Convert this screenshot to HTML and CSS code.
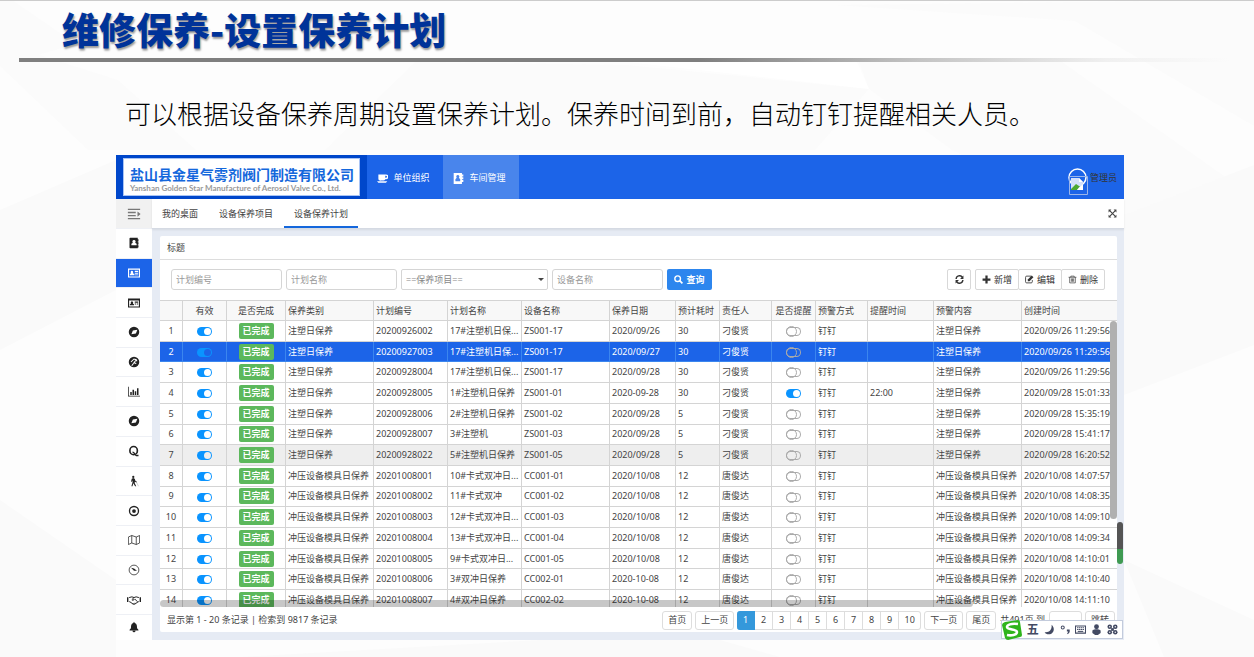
FILE: index.html
```html
<!DOCTYPE html>
<html lang="zh-CN">
<head>
  <meta charset="UTF-8" />
  <meta name="viewport" content="width=device-width, initial-scale=1.0"/>
  <title>维修保养-设置保养计划</title>
  <link rel="stylesheet" href="styles.css">
</head>
<body>
  <svg class="backdrop" viewBox="0 0 1254 657" preserveAspectRatio="none" aria-hidden="true">
    <path fill="#fbfbfb" d="M0 0h12L76 44 0 66zM0 66l36-12 82 26 78 70H88zM415 62l212 3 242 24-54 61H325zM835 5l240 16 179 105V0zM859 62h203l192 135v100L952 150 869 89z"/>
    <path fill="#fafafa" d="M1124 215l130-50v180l-130 50zM0 210l116-50v130L0 350zM0 500l116 80v77H0zM240 657l300-17h180l60 17zM1124 560l130 60v37h-90z"/>
    <path fill="#fff" d="M627 62h230l12 27z"/>
  </svg>

  <header class="slide-header">
    <h1>维修保养-设置保养计划</h1>
  </header>
  <p class="slide-text">可以根据设备保养周期设置保养计划。保养时间到前，自动钉钉提醒相关人员。</p>

  <div class="app">
    <div class="topbar">
      <div class="brand">
        <div class="brand-box">
          <div class="brand-name">盐山县金星气雾剂阀门制造有限公司</div>
          <div class="brand-en">Yanshan Golden Star Manufacture of Aerosol Valve Co., Ltd.</div>
        </div>
      </div>
      <nav class="topnav">
        <a href="#"><svg viewBox="0 0 16 16"><path d="M2 2h11a3 3 0 0 1 0 7h-1a3 3 0 0 1-3 2H6a3 3 0 0 1-4-3zM12 4v3h1a1.500 1.500 0 0 0 0-3zM0 12h15l-2 2H2z" fill-rule="evenodd"/></svg>单位组织</a>
        <a href="#" class="active"><svg viewBox="0 0 16 16"><path fill-rule="evenodd" d="M1 0h12v2h2v3h-2v1h2v3h-2v1h2v3h-2v3H1zM7 3a2.300 2.300 0 0 0-1.500 4L3.500 9v3h7V9L8.500 7A2.300 2.300 0 0 0 7 3z"/></svg>车间管理</a>
      </nav>
      <div class="user">
        <svg class="avatar" viewBox="0 0 22 28">
          <circle cx="10.500" cy="10.500" r="8.500" fill="none" stroke="#fff" stroke-width="1.500"/>
          <path d="M2.500 9.500h18v18h-18z" fill="none" stroke="#9bb5ea"/>
          <path d="M4 11h8l4 4v8H4z" fill="#d3e0fb"/><path d="M12 11v4h4z" fill="#fff"/>
          <path d="M4 22l5-5 3 2 1 0-3 4H4z" fill="#4ca832"/><path d="M10 23l6-6v6z" fill="#fff"/>
        </svg>
        <span>管理员</span>
      </div>
    </div>

    <div class="main">
      <nav class="sidebar">
        <button class="fold" aria-label="折叠菜单"><svg viewBox="0 0 16 16"><path d="M1 2h14v1.500H1zM1 5.500h9V7H1zM1 9h9v1.500H1zM1 12.500h14V14H1zM12 5l3.500 3L12 11z"/></svg></button>
        <a href="#" aria-label="通讯录"><svg viewBox="0 0 16 16"><path fill-rule="evenodd" d="M3 1h10v2h1v3h-1v1h1v3h-1v1h1v3h-1v1H3a1 1 0 0 1-1-1V2a1 1 0 0 1 1-1zM8 4a2 2 0 0 0-1.500 3.500L4.500 9v2h7V9l-2-1.500A2 2 0 0 0 8 4z"/></svg></a>
        <a href="#" class="active" aria-label="保养"><svg viewBox="0 0 16 16"><path fill-rule="evenodd" d="M0 2h16v12H0zM1.500 3.500v9h13v-9zM5 5a1.800 1.800 0 0 0-1 3l-1.500 1.500V11h6V9.500L6.500 8A1.800 1.800 0 0 0 5 5zM9 5h4.500v1.500H9zM9 7.500h4.500V9H9zM9 10h4.500v1H9z"/></svg></a>
        <a href="#" aria-label="卡片"><svg viewBox="0 0 16 16"><path fill-rule="evenodd" d="M0 2h16v12H0zM1.500 4.500v8h13v-8z"/><path d="M2.500 11V9.500L4 8.500a1.600 1.600 0 1 1 2.500 0L8 9.500V11zM9 6h4.500v1.500H9zM9 8.500h2v1.500H9zM12 8.500h1.500v1.500H12z"/></svg></a>
        <a href="#" aria-label="设备"><svg viewBox="0 0 16 16"><path fill-rule="evenodd" d="M8 1a7 7 0 1 0 0 14A7 7 0 0 0 8 1zM6.500 6l6-1-2 5-6 1z"/></svg></a>
        <a href="#" aria-label="维修"><svg viewBox="0 0 16 16"><circle cx="8" cy="8" r="7"/><path d="M5 13l3-4M4 8l4-4 3 1-3 4 3 1M10 4l2 3" fill="none" stroke="#fff" stroke-width="1.400"/></svg></a>
        <a href="#" aria-label="统计"><svg viewBox="0 0 16 16"><path d="M0 1h1v12h15v1H0zM3 8h2v4H3zM6 5h2v7H6zM9 7h2v5H9zM12 3h2v9h-2z"/></svg></a>
        <a href="#" aria-label="巡检"><svg viewBox="0 0 16 16"><path fill-rule="evenodd" d="M8 1a7 7 0 1 0 0 14A7 7 0 0 0 8 1zM6.500 6l6-1-2 5-6 1z"/></svg></a>
        <a href="#" aria-label="质量"><svg viewBox="0 0 16 16"><ellipse cx="7.500" cy="7.500" rx="5" ry="5.500" fill="none" stroke="currentColor" stroke-width="2.200"/><path d="M6 9.500c3 0 3 4 5 4.500h3" fill="none" stroke="currentColor" stroke-width="1.800"/></svg></a>
        <a href="#" aria-label="人员"><svg viewBox="0 0 16 16"><circle cx="7" cy="2.500" r="1.500"/><path d="M5 5l2-1 2 1 1 3 2 1-.5 1L9 9v2l2 4H9.500L7 11l-1 4H4.500L6 10V7L5 9H4z"/><path d="M11 9l3 6" stroke="#999" stroke-width=".6"/></svg></a>
        <a href="#" aria-label="目标"><svg viewBox="0 0 16 16"><circle cx="8" cy="8" r="6" fill="none" stroke="currentColor" stroke-width="1.800"/><circle cx="8" cy="8" r="2.500"/></svg></a>
        <a href="#" aria-label="地图"><svg viewBox="0 0 16 16"><path d="M.5 4L5 2l6 2 4.500-2v10L11 14l-6-2-4.500 2zM5 2v10M11 4v10" fill="none" stroke="currentColor"/></svg></a>
        <a href="#" aria-label="仪表"><svg viewBox="0 0 16 16"><circle cx="8" cy="8" r="6.500" fill="none" stroke="currentColor"/><path d="M4 5l4 1 4 3-4 0z"/></svg></a>
        <a href="#" aria-label="合作"><svg class="wide" viewBox="0 0 20 16"><path d="M0 4h2v7H0zM18 4h2v7h-2z"/><path d="M3 4.500l4-1 3 1 3-1 4 1M3 10.500h1l5 3.500h2l5-3.500h1M10 4.500L7 7.500q1 2 3 0l1-1 4 4M9 14l2-2" fill="none" stroke="currentColor" stroke-width="1.400"/></svg></a>
        <a href="#" aria-label="通知"><svg viewBox="0 0 16 16"><path d="M8 1l1 1.500c3 1 3 4 3 6 0 2 2 2 2 4H2c0-2 2-2 2-4 0-2 0-5 3-6zM6 13h4a2 2 0 0 1-4 0z"/></svg></a>
      </nav>

      <div class="workspace">
        <div class="tabs">
          <a href="#">我的桌面</a>
          <a href="#">设备保养项目</a>
          <a href="#" class="active">设备保养计划</a>
          <button class="fullscreen" aria-label="全屏"><svg viewBox="0 0 16 16"><path d="M1 1h5L1 6zM15 1v5l-5-5zM1 15v-5l5 5zM15 15h-5l5-5z"/><path d="M3 3l10 10M13 3L3 13" stroke="currentColor" stroke-width="2"/></svg></button>
        </div>

        <section class="panel">
          <h2>标题</h2>
          <form class="toolbar">
            <input type="text" placeholder="计划编号" aria-label="计划编号">
            <input type="text" placeholder="计划名称" aria-label="计划名称">
            <span class="select-box">
              <select aria-label="保养项目"><option>==保养项目==</option></select>
            </span>
            <input type="text" placeholder="设备名称" aria-label="设备名称">
            <button type="button" class="search"><svg viewBox="0 0 16 16"><circle cx="6.500" cy="6.500" r="5" fill="none" stroke="currentColor" stroke-width="2.500"/><path d="M10 10l5 5" stroke="currentColor" stroke-width="3"/></svg>查询</button>
            <button type="button" class="tool refresh" aria-label="刷新"><svg viewBox="0 0 16 16"><path d="M2 7a6 6 0 0 1 11-3M14 9a6 6 0 0 1-11 3" fill="none" stroke="currentColor" stroke-width="2.500"/><path d="M15 1v6H9zM1 15V9h6z"/></svg></button>
            <div class="tool-group">
              <button type="button" class="tool"><svg viewBox="0 0 16 16"><path d="M6 1h4v5h5v4h-5v5H6v-5H1V6h5z"/></svg>新增</button>
              <button type="button" class="tool"><svg viewBox="0 0 16 16"><path d="M11 2H3a2 2 0 0 0-2 2v8a2 2 0 0 0 2 2h8a2 2 0 0 0 2-2V9" fill="none" stroke="currentColor" stroke-width="1.500"/><path d="M5 11V8l7-7 3 3-7 7z"/></svg>编辑</button>
              <button type="button" class="tool"><svg viewBox="0 0 16 16"><path d="M1 4h14M5 4V2h6v2M3 4v10h10V4M6 6v6M8 6v6M10 6v6" fill="none" stroke="currentColor" stroke-width="1.200"/></svg>删除</button>
            </div>
          </form>

          <div class="grid">
            <table>
              <colgroup>
                <col class="w23"><col class="w44"><col class="w59"><col class="w88"><col class="w74">
                <col class="w74"><col class="w88"><col class="w66"><col class="w44"><col class="w52">
                <col class="w44"><col class="w52"><col class="w66"><col class="w88"><col>
              </colgroup>
              <thead>
                <tr>
                  <th></th><th class="center">有效</th><th class="center">是否完成</th><th>保养类别</th><th>计划编号</th>
                  <th>计划名称</th><th>设备名称</th><th>保养日期</th><th>预计耗时</th><th>责任人</th>
                  <th class="center">是否提醒</th><th>预警方式</th><th>提醒时间</th><th>预警内容</th><th>创建时间</th>
                </tr>
              </thead>
              <tbody id="planRows"></tbody>
            </table>
            <div class="scroll-y"></div>
            <div class="scroll-x"></div>
          </div>

          <div class="pager">
            <span class="total">显示第 1 - 20 条记录 | 检索到 9817 条记录</span>
            <button>首页</button>
            <button>上一页</button>
            <div class="pages">
              <button class="active">1</button><button>2</button><button>3</button><button>4</button><button>5</button><button>6</button><button>7</button><button>8</button><button>9</button><button>10</button>
            </div>
            <button>下一页</button>
            <button>尾页</button>
            <span class="jump">共491页 到</span>
            <input type="text" aria-label="页码">
            <button>跳转</button>
          </div>
        </section>
      </div>
    </div>

    <div class="level"></div>
    <div class="ime">
      <svg class="ime-logo" viewBox="0 0 20 20"><path d="M3 2l13-2q2 0 2 2l2 13q0 2-2 2L6 20q-2 0-3-2L0 5q0-2 3-3z" fill="#2fb41c"/><path d="M16 4C9 3 5 5 5 7c0 3 10 2 10 5 0 3-6 4-10 3" fill="none" stroke="#fff" stroke-width="2.600"/></svg>
      <span>五</span>
      <svg viewBox="0 0 16 16"><path d="M11 1c6 5 3 14-4 14-3 0-5-1-6-3 7 1 11-4 10-11z"/></svg>
      <svg viewBox="0 0 16 16"><circle cx="4" cy="5" r="2.200" fill="none" stroke="currentColor" stroke-width="1.500"/><path d="M10 8h4c1 4-1 6-4 7l2-4h-2z"/></svg>
      <svg viewBox="0 0 16 16"><path d="M0 2h16v12H0zM1.500 3.500v9h13v-9z" fill-rule="evenodd"/><path d="M3 5.500h10M3 8h10" stroke="currentColor" stroke-width="1.500" stroke-dasharray="2 .7"/><path d="M4 10h8v1.500H4z"/></svg>
      <svg viewBox="0 0 16 16"><circle cx="8" cy="4" r="3.500"/><path d="M2 10c0-3 12-3 12 0v3l-4 3H6l-4-3z"/></svg>
      <svg viewBox="0 0 16 16"><path d="M6 6h4v4H6z"/><circle cx="4" cy="4" r="3.300"/><circle cx="12" cy="4" r="3.300"/><circle cx="4" cy="12" r="3.300"/><circle cx="12" cy="12" r="3.300"/><path d="M4 4h0M12 4h0M4 12h0M12 12h0" stroke="#fff" stroke-width="2" stroke-linecap="round"/></svg>
    </div>
  </div>

  <script src="script.js"></script>
</body>
</html>
```

FILE: styles.css
```css
* {
  box-sizing: border-box;
}

body {
  margin: 0;
  font-family: "Noto Sans", "Noto Sans CJK SC", sans-serif;
  font-size: 9px;
  line-height: 12px;
  color: #444;
  background: #fdfdfd;
}

a {
  color: inherit;
  text-decoration: none;
}

button, input, select {
  font: inherit;
  color: inherit;
  margin: 0;
}

button {
  cursor: pointer;
}

svg {
  fill: currentColor;
  flex: none;
}

.backdrop {
  position: absolute;
  top: 0;
  left: 0;
  width: 100%;
  height: 100%;
  z-index: -1;
}

/* slide heading */
.slide-header {
  border-top: 1px solid #ccc;
  padding: 4px 0 0 19px;
}

.slide-header h1 {
  margin: 0;
  padding: 0 0 5px 43px;
  font-family: "Noto Sans CJK SC", sans-serif;
  font-size: 37px;
  line-height: 48px;
  font-weight: 900;
  color: #039;
  text-shadow: 1px 2px 2px rgba(0,0,0,0.4);
}

.slide-header::after {
  content: "";
  display: block;
  height: 4px;
  background: linear-gradient(to right, #7f7f7f 55%, #c4c4c4 73%, #f0f0f0 88%, transparent 98%);
}

.slide-text {
  margin: 35px 0 26px;
  padding-left: 125px;
  font-family: "Noto Sans CJK SC", sans-serif;
  font-size: 26px;
  line-height: 32px;
  font-weight: 300;
  color: #000;
}

/* application window */
.app {
  position: relative;
  margin: 0 130px 16px 116px;
  background: #e6ebf4;
}

.topbar {
  display: flex;
  height: 44px;
  background: #1c64e8;
  color: #fff;
}

.brand {
  width: 251px;
  padding: 3px 7px;
  background: #0047cb;
}

.brand-box {
  height: 38px;
  padding: 7px 0 0 6px;
  border: 1px solid #a9c4f5;
  background: #fff;
  white-space: nowrap;
}

.brand-name {
  font-size: 14px;
  line-height: 17px;
  font-weight: bold;
  color: #1467dc;
}

.brand-en {
  font-family: Lato, sans-serif;
  font-size: 8px;
  line-height: 10px;
  font-weight: bold;
  color: #999;
}

.topnav {
  display: flex;
}

.topnav a {
  display: flex;
  align-items: center;
  justify-content: center;
  gap: 5px;
  width: 76px;
  padding: 2px 3px 0 0;
}

.topnav a.active {
  background: #4985ec;
}

.topnav svg {
  width: 11px;
  height: 11px;
}

.user {
  display: flex;
  align-items: center;
  gap: 1px;
  margin-left: auto;
  padding: 1px 7px 0 0;
  color: #333;
}

.avatar {
  width: 22px;
  height: 28px;
  margin-top: 6px;
}

.main {
  display: flex;
}

.sidebar {
  display: flex;
  flex-direction: column;
  width: 36px;
  background: #fff;
  color: #222;
}

.sidebar a, .fold {
  display: flex;
  flex: 1;
  align-items: center;
  justify-content: center;
  border: 0;
  border-bottom: 1px solid #eef0f5;
}

.sidebar a:last-child {
  flex: none;
  height: 25px;
  border: 0;
}

.sidebar .fold {
  flex: none;
  height: 30px;
  background: #f1f1f1;
  color: #777;
}

.sidebar a.active {
  background: #1c64e8;
  color: #fff;
}

.sidebar svg {
  width: 12px;
  height: 12px;
}

.sidebar .fold svg, .sidebar .wide {
  width: 14px;
  height: 14px;
}

.workspace {
  flex: 1;
  min-width: 0;
}

.tabs {
  display: flex;
  gap: 1px;
  height: 30px;
  background: #fff;
  border-bottom: 1px solid #d5dae3;
  box-shadow: 0 1px 2px rgba(0,0,0,0.08);
}

.tabs a {
  padding: 9px 10px 0;
  border-bottom: 2px solid transparent;
}

.tabs a.active {
  border-color: #1467dc;
}

.fullscreen {
  display: flex;
  align-items: center;
  margin-left: auto;
  padding: 0 7px;
  border: 0;
  background: none;
}

.fullscreen svg {
  width: 9px;
  height: 9px;
}

/* list panel */
.panel {
  margin: 7px 7px 8px 8px;
  background: #fff;
  border-radius: 2px;
}

.panel h2 {
  margin: 0;
  padding: 6px 7px 5px;
  border-bottom: 1px solid #ddd;
  font-size: 9px;
  line-height: 12px;
  font-weight: normal;
}

.toolbar {
  display: flex;
  gap: 4px;
  padding: 9px 12px 10px 11px;
}

.toolbar input, .toolbar select {
  width: 111px;
  height: 21px;
  padding: 0 4px;
  border: 1px solid #d5d5d5;
  border-radius: 3px;
  background: #fff;
  color: #888;
}

.toolbar input::placeholder {
  color: #999;
}

.toolbar select {
  width: 147px;
  border-radius: 2px;
  appearance: none;
}

.select-box {
  position: relative;
}

.select-box::after {
  content: "";
  position: absolute;
  top: 9px;
  right: 4px;
  border: 3px solid transparent;
  border-top-color: #444;
}

.search, .tool {
  display: flex;
  align-items: center;
  justify-content: center;
  gap: 3px;
  height: 21px;
  padding: 0;
  border-radius: 2px;
}

.search {
  width: 45px;
  border: 0;
  background: #2d86ee;
  color: #fff;
  font-weight: bold;
}

.search svg, .tool svg {
  width: 9px;
  height: 9px;
}

.tool {
  width: 44px;
  border: 1px solid #d8d8d8;
  background: #fff;
  color: #333;
}

.refresh {
  width: 24px;
  margin-left: auto;
}

.tool-group {
  display: flex;
}

.tool-group .tool + .tool {
  margin-left: -1px;
}

.grid {
  position: relative;
  height: 307px;
  overflow: hidden;
}

.grid table {
  width: 100%;
  height: 311px;
  table-layout: fixed;
  border-collapse: separate;
  border-spacing: 0;
}

.w23 { width: 23px; }
.w44 { width: 44px; }
.w52 { width: 52px; }
.w59 { width: 59px; }
.w66 { width: 66px; }
.w74 { width: 74px; }
.w88 { width: 88px; }

.grid th, .grid td {
  padding: 0 2px;
  border-right: 1px solid #d4d4d4;
  border-bottom: 1px solid #d4d4d4;
  text-align: left;
  font-weight: normal;
  white-space: nowrap;
}

.grid th {
  height: 21px;
  border-top: 1px solid #d4d4d4;
  background: #f8f8f8;
}

.grid th:last-child, .grid td:last-child {
  border-right: 0;
}

.grid .center, .grid td:first-child {
  text-align: center;
}

.grid tr.hover {
  --row: #eee;
}

.grid tr.selected {
  --row: #1c64e8;
  color: #fff;
}

.grid td {
  background: var(--row, #fff);
}

.grid tr.selected td {
  border-color: #3b86ee;
}

.done {
  display: inline-block;
  width: 35px;
  height: 16px;
  border-radius: 2px;
  background: #5cb85c;
  color: #fff;
  font-weight: bold;
  line-height: 16px;
  vertical-align: middle;
}

/* toggle */
.switch {
  appearance: none;
  display: inline-flex;
  align-items: center;
  width: 15px;
  height: 9px;
  border-radius: 5px;
  box-shadow: inset 0 0 0 1px #aaa;
  vertical-align: middle;
}

.switch::before {
  content: "";
  width: 9px;
  height: 9px;
  border: 1px solid #aaa;
  border-radius: 50%;
}

.switch:checked {
  justify-content: flex-end;
  padding-right: 1px;
  background: #0a94ff;
  box-shadow: none;
}

.switch:checked::before {
  width: 7px;
  height: 7px;
  border: 0;
  background: var(--row, #fff);
}

.scroll-y, .scroll-x {
  position: absolute;
  border-radius: 4px;
}

.scroll-y {
  top: 21px;
  right: 0;
  width: 7px;
  height: 198px;
  background: #b0b0b0;
}

.scroll-x {
  bottom: 0;
  left: 0;
  width: 85%;
  height: 7px;
  background: rgba(0,0,0,0.22);
}

/* pagination */
.pager {
  display: flex;
  align-items: center;
  gap: 3px;
  height: 25px;
  padding: 1px 2px 0 7px;
  white-space: nowrap;
}

.total {
  margin-right: auto;
}

.pager button, .pager input {
  height: 19px;
  padding: 0 5px;
  border: 1px solid #ddd;
  border-radius: 3px;
  background: #fff;
}

.pager input {
  width: 33px;
}

.jump {
  padding: 0 1px;
}

.pages {
  display: flex;
}

.pages button {
  min-width: 18px;
  padding: 0 3px;
  border-left: 0;
  border-radius: 0;
}

.pages button:last-child {
  min-width: 22px;
  border-radius: 0 3px 3px 0;
}

.pages button.active {
  border-color: #3498db;
  border-radius: 3px 0 0 3px;
  background: #3498db;
  color: #fff;
}

/* floating desktop widgets */
.level {
  position: absolute;
  right: 1px;
  bottom: 76px;
  width: 6px;
  height: 42px;
  border-radius: 3px;
  background: linear-gradient(#555 65%, #3f9a52 65%);
}

.ime {
  position: absolute;
  right: 1px;
  bottom: 1px;
  display: flex;
  align-items: center;
  justify-content: space-between;
  width: 122px;
  height: 19px;
  padding: 0 4px 0 0;
  border: 1px solid #c3cbdc;
  background: #fff;
  color: #434a63;
}

.ime span {
  font-size: 12px;
  font-weight: bold;
}

.ime svg {
  width: 11px;
  height: 11px;
}

.ime .ime-logo {
  width: 20px;
  height: 20px;
}
```

FILE: script.js
```js
const injection = '注塑日保养';
const press = '冲压设备模具日保养';

// type, plan no, plan name, device, date, hours, owner, remind time, created
const plans = [
  [injection, '20200926002', '17#注塑机日保...', 'ZS001-17', '2020/09/26', 30, '刁俊贤', '', '2020/09/26 11:29:56'],
  [injection, '20200927003', '17#注塑机日保...', 'ZS001-17', '2020/09/27', 30, '刁俊贤', '', '2020/09/26 11:29:56'],
  [injection, '20200928004', '17#注塑机日保...', 'ZS001-17', '2020/09/28', 30, '刁俊贤', '', '2020/09/26 11:29:56'],
  [injection, '20200928005', '1#注塑机日保养', 'ZS001-01', '2020-09-28', 30, '刁俊贤', '22:00', '2020/09/28 15:01:33'],
  [injection, '20200928006', '2#注塑机日保养', 'ZS001-02', '2020/09/28', 5, '刁俊贤', '', '2020/09/28 15:35:19'],
  [injection, '20200928007', '3#注塑机', 'ZS001-03', '2020/09/28', 5, '刁俊贤', '', '2020/09/28 15:41:17'],
  [injection, '20200928022', '5#注塑机日保养', 'ZS001-05', '2020/09/28', 5, '刁俊贤', '', '2020/09/28 16:20:52'],
  [press, '20201008001', '10#卡式双冲日...', 'CC001-01', '2020/10/08', 12, '唐俊达', '', '2020/10/08 14:07:57'],
  [press, '20201008002', '11#卡式双冲', 'CC001-02', '2020/10/08', 12, '唐俊达', '', '2020/10/08 14:08:35'],
  [press, '20201008003', '12#卡式双冲日...', 'CC001-03', '2020/10/08', 12, '唐俊达', '', '2020/10/08 14:09:10'],
  [press, '20201008004', '13#卡式双冲日...', 'CC001-04', '2020/10/08', 12, '唐俊达', '', '2020/10/08 14:09:34'],
  [press, '20201008005', '9#卡式双冲日...', 'CC001-05', '2020/10/08', 12, '唐俊达', '', '2020/10/08 14:10:01'],
  [press, '20201008006', '3#双冲日保养', 'CC002-01', '2020-10-08', 12, '唐俊达', '', '2020/10/08 14:10:40'],
  [press, '20201008007', '4#双冲日保养', 'CC002-02', '2020-10-08', 12, '唐俊达', '', '2020/10/08 14:11:10']
];

const rowClass = { 1: 'selected', 6: 'hover' };

document.getElementById('planRows').innerHTML = plans.map((p, i) => {
  const [type, no, name, device, date, hours, owner, remind, created] = p;
  return `<tr class="${rowClass[i] || ''}">
    <td>${i + 1}</td>
    <td class="center"><input type="checkbox" class="switch" aria-label="有效" checked></td>
    <td class="center"><span class="done">已完成</span></td>
    <td>${type}</td><td>${no}</td><td>${name}</td><td>${device}</td><td>${date}</td><td>${hours}</td><td>${owner}</td>
    <td class="center"><input type="checkbox" class="switch" aria-label="是否提醒" ${remind ? 'checked' : ''}></td>
    <td>钉钉</td><td>${remind}</td><td>${type}</td><td>${created}</td>
  </tr>`;
}).join('');
```
